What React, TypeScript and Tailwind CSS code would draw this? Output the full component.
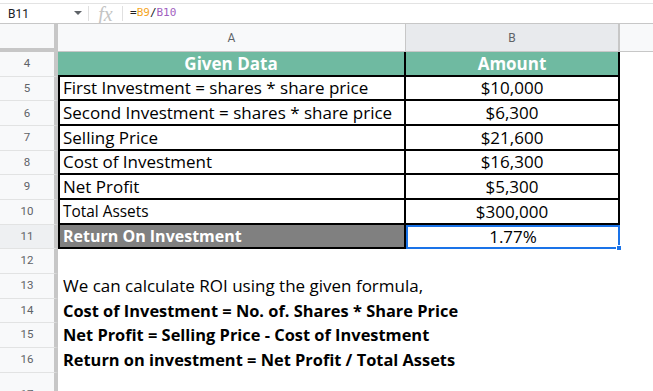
import React from "react";

const rowH = "h-[24.67px]";
const cellFont = { fontFamily: "'Open Sans', Lato, sans-serif" };

function RowNum({ n, active, cut }: { n: number; active?: boolean; cut?: boolean }) {
  return (
    <div
      className={`w-[58px] shrink-0 ${rowH} flex justify-center border-b border-[#e2e3e3] border-r-[4px] border-r-[#c7c7c7] text-[11.5px] text-[#5f6368] ${
        active ? "bg-[#eef0f2]" : "bg-[#f8f9fa]"
      } ${cut ? "items-start pt-[13px]" : "items-center"}`}
      style={{ fontFamily: "Roboto, sans-serif" }}
    >
      {n}
    </div>
  );
}

interface DataRow {
  n: number;
  label: string;
  value: string;
  small?: boolean;
}

const dataRows: DataRow[] = [
  { n: 5, label: "First Investment = shares * share price", value: "$10,000" },
  { n: 6, label: "Second Investment = shares * share price", value: "$6,300" },
  { n: 7, label: "Selling Price", value: "$21,600" },
  { n: 8, label: "Cost of Investment", value: "$16,300" },
  { n: 9, label: "Net Profit", value: "$5,300" },
  { n: 10, label: "Total Assets", value: "$300,000", small: true },
];

const notes = [
  { n: 13, text: "We can calculate ROI using the given formula,", bold: false },
  { n: 14, text: "Cost of Investment = No. of. Shares * Share Price", bold: true },
  { n: 15, text: "Net Profit = Selling Price - Cost of Investment", bold: true },
  { n: 16, text: "Return on investment = Net Profit / Total Assets", bold: true },
];

export default function App() {
  return (
    <div className="w-[653px] h-[391px] overflow-hidden bg-white text-black">
      {/* formula bar */}
      <div className="h-[3px] bg-white" />
      <div className="h-[21px] flex items-center border-t border-[#e3e3e3] border-b border-b-[#c7c7c7] text-[12px]">
        <div className="w-[88px] flex items-center justify-between pl-[8px] pr-[6px] text-[#202124]" style={{ fontFamily: "Roboto, sans-serif" }}>
          <span>B11</span>
          <svg width="8" height="5" viewBox="0 0 8 5">
            <path d="M0 0 L8 0 L4 4 Z" fill="#5f6368" />
          </svg>
        </div>
        <div className="w-px h-[15px] bg-[#e0e0e0]" />
        <div className="w-[33px] text-center text-[20px] italic text-[#c4c4c4] leading-none" style={{ fontFamily: "'Liberation Serif', serif" }}>
          fx
        </div>
        <div className="w-px h-[15px] bg-[#e0e0e0]" />
        <div className="pl-[7px] text-[11px]" style={{ fontFamily: "'DejaVu Sans Mono', monospace" }}>
          <span className="text-[#202124]">=</span>
          <span className="text-[#f5a623]">B9</span>
          <span className="text-[#202124]">/</span>
          <span className="text-[#a15fc0]">B10</span>
        </div>
      </div>

      {/* column headers */}
      <div className="flex h-[28px] text-[12px] text-[#5f6368]" style={{ fontFamily: "Roboto, sans-serif" }}>
        <div className="w-[58px] shrink-0 bg-[#f8f9fa] border-r-[4px] border-r-[#c7c7c7] border-b-[4px] border-b-[#c7c7c7]" />
        <div className="w-[348px] shrink-0 bg-[#f8f9fa] border-b border-[#c7c7c7] border-r border-r-[#c7c7c7] flex items-center justify-center">
          A
        </div>
        <div className="w-[214px] shrink-0 bg-[#e8eaed] border-b border-[#c7c7c7] border-r-2 border-r-[#c7c7c7] flex items-center justify-center">
          B
        </div>
        <div className="flex-1 bg-[#f8f9fa] border-b border-[#c7c7c7]" />
      </div>

      {/* row 4 header */}
      <div className="flex" style={cellFont}>
        <RowNum n={4} />
        <div className={`w-[348px] shrink-0 ${rowH} bg-[#6fbaa1] border-b-2 border-black border-r-2 flex items-center justify-center text-white font-bold text-[17px]`}>
          Given Data
        </div>
        <div className={`w-[214px] shrink-0 ${rowH} bg-[#6fbaa1] border-b-2 border-black border-r-2 flex items-center justify-center text-white font-bold text-[17px]`}>
          Amount
        </div>
      </div>

      {dataRows.map((r) => (
        <div key={r.n} className="flex" style={cellFont}>
          <RowNum n={r.n} />
          <div
            className={`w-[348px] shrink-0 ${rowH} border-l-2 border-black border-b-2 border-r-2 flex items-center pl-[3px] ${
              r.small ? "text-[15.4px]" : "text-[17px]"
            } whitespace-nowrap`}
          >
            {r.label}
          </div>
          <div className={`w-[214px] shrink-0 ${rowH} border-b-2 border-black border-r-2 flex items-center justify-center text-[17px]`}>
            {r.value}
          </div>
        </div>
      ))}

      {/* row 11 */}
      <div className="flex" style={cellFont}>
        <RowNum n={11} active />
        <div className={`w-[348px] shrink-0 ${rowH} bg-[#808080] border-l-2 border-black border-b-2 border-r-2 flex items-center pl-[3px] text-white font-bold text-[16px]`}>
          Return On Investment
        </div>
        <div className={`relative w-[214px] shrink-0 ${rowH} border-2 border-[#1a73e8] flex items-center justify-center text-[17px]`}>
          1.77%
          <div className="absolute right-[-4px] bottom-[-4px] w-[6px] h-[6px] bg-[#1a73e8] border border-white" />
        </div>
      </div>

      {/* row 12 */}
      <div className="flex">
        <RowNum n={12} />
      </div>

      {notes.map((r) => (
        <div key={r.n} className="flex" style={cellFont}>
          <RowNum n={r.n} />
          <div className={`${rowH} flex items-center pl-[5px] whitespace-nowrap ${r.bold ? "font-bold text-[16.4px]" : "text-[17px]"}`}>
            {r.text}
          </div>
        </div>
      ))}

      <div className="flex">
        <RowNum n={17} cut />
      </div>
    </div>
  );
}
